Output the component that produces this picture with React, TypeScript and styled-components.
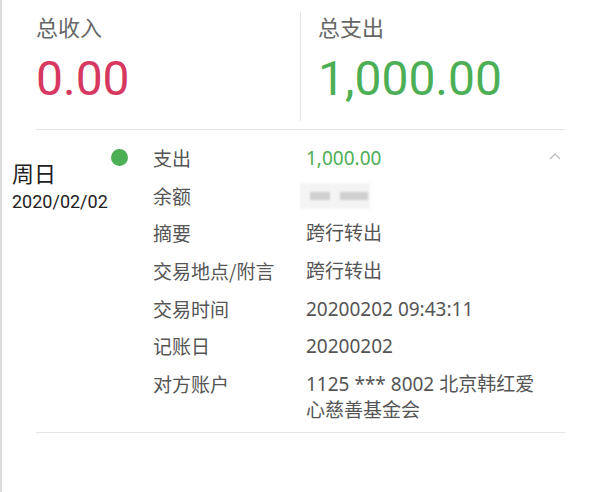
import * as React from 'react';
import styled, { createGlobalStyle } from 'styled-components';

const GlobalStyle = createGlobalStyle`
	html, body {
		margin: 0;
		padding: 0;
		background: #fff;
	}
	body {
		font-family: Roboto, "Noto Sans", "Noto Sans CJK SC", sans-serif;
	}
`;

const rows: { label: string; value?: string; tone?: 'green' }[] = [
	{ label: '支出', value: '1,000.00', tone: 'green' },
	{ label: '余额' },
	{ label: '摘要', value: '跨行转出' },
	{ label: '交易地点/附言', value: '跨行转出' },
	{ label: '交易时间', value: '20200202 09:43:11' },
	{ label: '记账日', value: '20200202' },
	{ label: '对方账户', value: '1125 *** 8002 北京韩红爱心慈善基金会' }
];

export default function App() {
	return (
		<Page>
			<GlobalStyle />
			<Summary>
				<SummaryCol>
					<SummaryTitle>总收入</SummaryTitle>
					<SummaryAmount tone="red">0.00</SummaryAmount>
				</SummaryCol>
				<VDivider />
				<SummaryCol>
					<SummaryTitle>总支出</SummaryTitle>
					<SummaryAmount tone="green">1,000.00</SummaryAmount>
				</SummaryCol>
			</Summary>
			<Record>
				<DateCol>
					<Weekday>周日</Weekday>
					<DateText>2020/02/02</DateText>
				</DateCol>
				<DotCol>
					<Dot />
				</DotCol>
				<Details>
					{rows.map((r, i) => (
						<React.Fragment key={r.label}>
							<Label>{r.label}</Label>
							<Value tone={r.tone}>
								{r.value !== undefined ? r.value : (
									<Blurred>
										<BlurBlock w={20} />
										<BlurBlock w={28} />
									</Blurred>
								)}
							</Value>
							<Toggle>
								{i === 0 && (
									<svg width="12" height="8" viewBox="0 0 12 8">
										<polyline points="1,7 6,2 11,7" fill="none" stroke="#b8b8b8" strokeWidth="1.2" />
									</svg>
								)}
							</Toggle>
						</React.Fragment>
					))}
				</Details>
			</Record>
			<HDivider />
		</Page>
	);
}

const Page = styled.div`
	height: 492px;
	border-left: 2px solid #dcdcdc;
	box-sizing: border-box;
	overflow: hidden;
`;

const Summary = styled.div`
	display: flex;
	margin: 0 35px 0 34px;
	height: 130px;
	border-bottom: 1px solid #e6e6e6;
	box-sizing: border-box;
`;

const SummaryCol = styled.div`
	display: flex;
	flex-direction: column;
	padding-top: 11px;
	&:first-child {
		width: 264px;
	}
	&:last-child {
		padding-left: 17px;
	}
`;

const VDivider = styled.div`
	width: 1px;
	background: #e6e6e6;
	margin: 12px 0 8px;
`;

const HDivider = styled.div`
	height: 1px;
	background: #e6e6e6;
	margin: 0 35px 0 34px;
`;

const SummaryTitle = styled.div`
	font-family: "Noto Sans CJK SC", sans-serif;
	font-size: 22px;
	line-height: 30px;
	color: #666;
`;

const SummaryAmount = styled.div<{ tone: 'red' | 'green' }>`
	margin-top: 10px;
	font-size: 48px;
	line-height: 56px;
	color: ${p => (p.tone === 'red' ? '#d7385f' : '#4caf55')};
`;

const Record = styled.div`
	display: flex;
	margin-right: 35px;
	padding: 9px 0 3px;
`;

const DateCol = styled.div`
	width: 100px;
	padding: 19px 0 0 10px;
	box-sizing: content-box;
	display: flex;
	flex-direction: column;
`;

const Weekday = styled.div`
	font-family: "Noto Sans CJK SC", sans-serif;
	font-size: 22px;
	line-height: 28px;
	color: #222;
`;

const DateText = styled.div`
	margin-top: 5px;
	font-size: 18px;
	line-height: 22px;
	color: #222;
`;

const DotCol = styled.div`
	width: 41px;
`;

const Dot = styled.div`
	width: 17px;
	height: 17px;
	border-radius: 50%;
	background: #4caf55;
	margin: 10px 0 0 -1px;
`;

const Details = styled.div`
	display: grid;
	grid-template-columns: 153px 238px 1fr;
	flex: 1;
`;

const Label = styled.div`
	font-family: "Noto Sans CJK SC", sans-serif;
	font-size: 19px;
	line-height: 26px;
	padding: 6px 0 5.7px;
	color: #555;
`;

const Value = styled.div<{ tone?: 'green' }>`
	font-family: "Noto Sans", "Noto Sans CJK SC", sans-serif;
	font-size: 19px;
	line-height: 26px;
	padding: 6px 0 5.7px;
	color: ${p => (p.tone === 'green' ? '#4caf55' : '#555')};
`;

const Toggle = styled.div`
	display: flex;
	justify-content: center;
	padding-top: 13px;
`;

const Blurred = styled.div`
	display: flex;
	align-items: center;
	gap: 10px;
	height: 26px;
	width: 60px;
	margin-left: -6px;
	padding-left: 10px;
	background: #f4f4f4;
	filter: blur(1px);
`;

const BlurBlock = styled.div<{ w: number }>`
	width: ${p => p.w}px;
	height: 8px;
	background: #cfcfcf;
`;
